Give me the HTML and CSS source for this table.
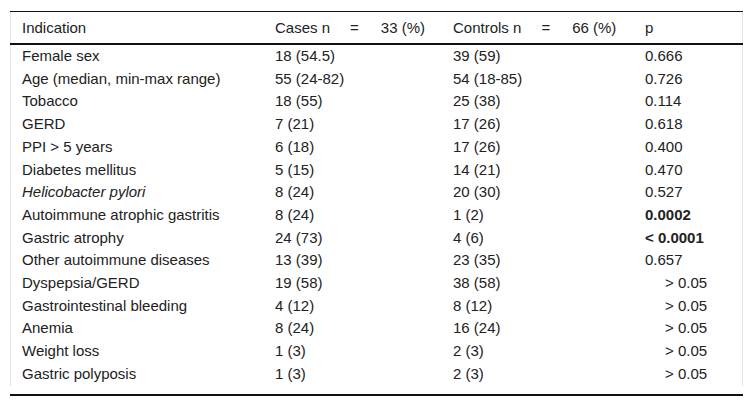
FILE: index.html
```html
<!DOCTYPE html>
<html lang="en">
<head>
<meta charset="utf-8">
<title>Table</title>
<link rel="stylesheet" href="styles.css">
</head>
<body>
<div class="wrap">
  <table class="data">
    <colgroup>
      <col class="c1"><col class="c2"><col class="c3"><col class="c4">
    </colgroup>
    <thead>
      <tr>
        <th>Indication</th>
        <th>Cases n<span class="eq">=</span>33 (%)</th>
        <th>Controls n<span class="eq">=</span>66 (%)</th>
        <th>p</th>
      </tr>
    </thead>
    <tbody>
      <tr><td>Female sex</td><td>18 (54.5)</td><td>39 (59)</td><td>0.666</td></tr>
      <tr><td>Age (median, min-max range)</td><td>55 (24-82)</td><td>54 (18-85)</td><td>0.726</td></tr>
      <tr><td>Tobacco</td><td>18 (55)</td><td>25 (38)</td><td>0.114</td></tr>
      <tr><td>GERD</td><td>7 (21)</td><td>17 (26)</td><td>0.618</td></tr>
      <tr><td>PPI &gt; 5 years</td><td>6 (18)</td><td>17 (26)</td><td>0.400</td></tr>
      <tr><td>Diabetes mellitus</td><td>5 (15)</td><td>14 (21)</td><td>0.470</td></tr>
      <tr><td><em>Helicobacter pylori</em></td><td>8 (24)</td><td>20 (30)</td><td>0.527</td></tr>
      <tr><td>Autoimmune atrophic gastritis</td><td>8 (24)</td><td>1 (2)</td><td><strong>0.0002</strong></td></tr>
      <tr><td>Gastric atrophy</td><td>24 (73)</td><td>4 (6)</td><td><strong>&lt; 0.0001</strong></td></tr>
      <tr><td>Other autoimmune diseases</td><td>13 (39)</td><td>23 (35)</td><td>0.657</td></tr>
      <tr><td>Dyspepsia/GERD</td><td>19 (58)</td><td>38 (58)</td><td class="ind">&gt; 0.05</td></tr>
      <tr><td>Gastrointestinal bleeding</td><td>4 (12)</td><td>8 (12)</td><td class="ind">&gt; 0.05</td></tr>
      <tr><td>Anemia</td><td>8 (24)</td><td>16 (24)</td><td class="ind">&gt; 0.05</td></tr>
      <tr><td>Weight loss</td><td>1 (3)</td><td>2 (3)</td><td class="ind">&gt; 0.05</td></tr>
      <tr><td>Gastric polyposis</td><td>1 (3)</td><td>2 (3)</td><td class="ind">&gt; 0.05</td></tr>
    </tbody>
  </table>
</div>
<div class="rule"></div>
</body>
</html>
```

FILE: styles.css
```css
html, body {
  margin: 0;
  padding: 0;
  background: #fff;
}
body {
  padding: 11px 10px 0 10px;
  font-family: "Liberation Sans", Arial, sans-serif;
  font-size: 15px;
  color: #222;
}
.wrap {
  border-left: 1px solid #e4e4e4;
  border-right: 1px solid #e4e4e4;
  width: 733px;
  box-sizing: border-box;
}
.data {
  width: 733px;
  margin-left: -1px;
  border-collapse: collapse;
  table-layout: fixed;
}
.c1 { width: 253px; }
.c2 { width: 178px; }
.c3 { width: 192px; }
.c4 { width: 110px; }
.data thead tr {
  border-top: 1px solid #111;
  border-bottom: 2px solid #111;
}
.data th {
  font-weight: normal;
  text-align: left;
  padding: 7px 12px;
  line-height: 17px;
  white-space: nowrap;
}
.eq {
  display: inline-block;
  margin: 0 22px 0 20px;
}
.data td {
  padding: 3px 12px;
  line-height: 16.7px;
  white-space: nowrap;
}
.data td.ind {
  padding-left: 32px;
}
.rule {
  width: 733px;
  margin-top: 8px;
  border-top: 2px solid #111;
}
```
